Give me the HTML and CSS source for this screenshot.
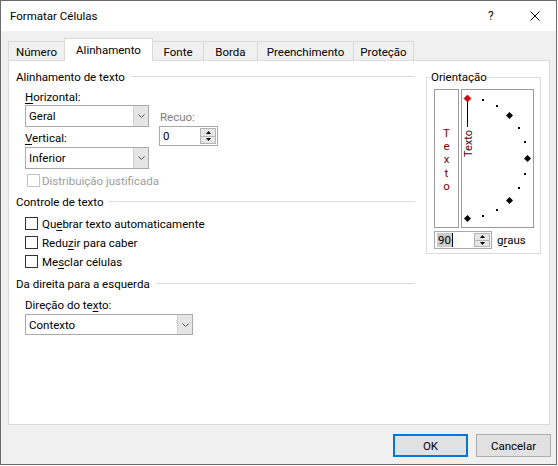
FILE: index.html
```html
<!DOCTYPE html>
<html lang="pt-BR">
<head>
<meta charset="utf-8">
<title>Formatar Células</title>
<link rel="stylesheet" href="styles.css">
</head>
<body>
<div class="window">
  <div class="titlebar">
    <span class="title">Formatar Células</span>
    <span class="help">?</span>
    <span class="close"><svg width="10" height="10" viewBox="0 0 10 10"><path d="M0.5 0.5L9.5 9.5M9.5 0.5L0.5 9.5" stroke="#000" stroke-width="1"/></svg></span>
  </div>
  <div class="client">
    <div class="tabs">
      <div class="tab t-numero">Número</div>
      <div class="tab t-alin active">Alinhamento</div>
      <div class="tab t-fonte">Fonte</div>
      <div class="tab t-borda">Borda</div>
      <div class="tab t-preench">Preenchimento</div>
      <div class="tab t-protecao">Proteção</div>
    </div>
    <div class="pane">
      <div class="left">
        <div class="ghead">Alinhamento de texto</div>
        <div class="align-fields">
          <div class="col-a">
            <div class="lbl"><u>H</u>orizontal:</div>
            <div class="combo"><span class="combo-val">Geral</span><span class="combo-btn"><svg width="7" height="4" viewBox="0 0 7 4"><polyline points="0.5,0.5 3.5,3.5 6.5,0.5" fill="none" stroke="#555" stroke-width="1"/></svg></span></div>
            <div class="lbl lbl-v"><u>V</u>ertical:</div>
            <div class="combo combo-v"><span class="combo-val">Inferior</span><span class="combo-btn"><svg width="7" height="4" viewBox="0 0 7 4"><polyline points="0.5,0.5 3.5,3.5 6.5,0.5" fill="none" stroke="#555" stroke-width="1"/></svg></span></div>
          </div>
          <div class="col-b">
            <div class="lbl dim recuo">Recuo:</div>
            <div class="spin spin-recuo">
              <span class="spin-val">0</span>
              <span class="spin-btns">
                <span class="sb"><svg width="5" height="3" viewBox="0 0 5 3"><polygon points="0,3 5,3 2.5,0" fill="#000"/></svg></span>
                <span class="sb"><svg width="5" height="3" viewBox="0 0 5 3"><polygon points="0,0 5,0 2.5,3" fill="#000"/></svg></span>
              </span>
            </div>
          </div>
        </div>
        <div class="check disabled"><span class="box"></span><span>Distribuição justificada</span></div>
        <div class="ghead gh2">Controle de texto</div>
        <div class="check first"><span class="box"></span><span>Qu<u>e</u>brar texto automaticamente</span></div>
        <div class="check"><span class="box"></span><span>Redu<u>z</u>ir para caber</span></div>
        <div class="check"><span class="box"></span><span>Me<u>s</u>clar células</span></div>
        <div class="ghead gh3">Da direita para a esquerda</div>
        <div class="lbl lbl-dir">Direção do te<u>x</u>to:</div>
        <div class="combo combo-dir"><span class="combo-val">Contexto</span><span class="combo-btn"><svg width="7" height="4" viewBox="0 0 7 4"><polyline points="0.5,0.5 3.5,3.5 6.5,0.5" fill="none" stroke="#555" stroke-width="1"/></svg></span></div>
      </div>
      <fieldset class="orient">
        <legend>Orientação</legend>
        <div class="orient-boxes">
          <div class="vbox">T<br>e<br>x<br>t<br>o</div>
          <div class="dial">
            <svg class="dial-svg" width="71" height="137" viewBox="0 0 71 137">
              <line x1="5.5" y1="12" x2="5.5" y2="37" stroke="#000" stroke-width="1"/>
              <text class="dial-text" transform="translate(10 67) rotate(-90)" textLength="27" lengthAdjust="spacingAndGlyphs">Texto</text>
              <polygon points="5.5,5 9,8.5 5.5,12 2,8.5" fill="#e00000" stroke="#700" stroke-width="0.6"/>
              <rect x="20" y="9" width="2" height="2"/>
              <rect x="34" y="15" width="2" height="2"/>
              <polygon points="47.5,22 51,25.5 47.5,29 44,25.5"/>
              <rect x="56" y="37" width="2" height="2"/>
              <rect x="62" y="51" width="2" height="2"/>
              <polygon points="65.5,65 69,68.5 65.5,72 62,68.5"/>
              <rect x="62" y="83" width="2" height="2"/>
              <rect x="56" y="97" width="2" height="2"/>
              <polygon points="47.5,107 51,110.5 47.5,114 44,110.5"/>
              <rect x="34" y="119" width="2" height="2"/>
              <rect x="20" y="125" width="2" height="2"/>
              <polygon points="5.5,125 9,128.5 5.5,132 2,128.5"/>
            </svg>
          </div>
        </div>
        <div class="deg-row">
          <div class="spin spin-deg">
            <span class="spin-val"><span class="sel">90</span><span class="caret"></span></span>
            <span class="spin-btns">
              <span class="sb"><svg width="5" height="3" viewBox="0 0 5 3"><polygon points="0,3 5,3 2.5,0" fill="#000"/></svg></span>
              <span class="sb"><svg width="5" height="3" viewBox="0 0 5 3"><polygon points="0,0 5,0 2.5,3" fill="#000"/></svg></span>
            </span>
          </div>
          <span class="graus">g<u>r</u>aus</span>
        </div>
      </fieldset>
    </div>
    <div class="buttons">
      <button class="btn ok">OK</button>
      <button class="btn">Cancelar</button>
    </div>
  </div>
</div>
</body>
</html>
```

FILE: styles.css
```css
* { box-sizing: border-box; }
html, body { margin: 0; background: #fff; }
body {
  font-family: Roboto, "Noto Sans", sans-serif;
  font-size: 11.5px;
  line-height: 16px;
  color: #000;
}
u { text-decoration-thickness: 1px; text-underline-offset: 2px; }

.window {
  width: 557px;
  height: 465px;
  border: 1px solid #6b6b6b;
  background: #f0f0f0;
  display: flex;
  flex-direction: column;
}

.titlebar {
  flex: none;
  height: 30px;
  background: #fff;
  display: flex;
  align-items: center;
  padding-left: 9px;
  font-size: 12px;
}
.title { flex: 1; font-size: 11.5px; }
.help { width: 6px; margin-right: 36px; color: #111; }
.close { width: 10px; height: 10px; margin-right: 16px; display: flex; margin-top: -1px; }

.client {
  flex: 1;
  padding: 7px 5px 0 7px;
  display: flex;
  flex-direction: column;
}

.tabs {
  display: flex;
  align-items: flex-end;
  height: 22px;
}
.tab {
  height: 19px;
  border: 1px solid #d9d9d9;
  border-bottom: 0;
  margin-right: -1px;
  background: #f0f0f0;
  text-align: center;
  padding-top: 2px;
}
.tab.active {
  height: 23px;
  margin-bottom: -1px;
  background: #fff;
  position: relative;
  z-index: 1;
  padding-top: 3px;
}
.t-numero { width: 57px; }
.t-alin { width: 89px; }
.t-fonte { width: 52px; }
.t-borda { width: 55px; }
.t-preench { width: 97px; }
.t-protecao { width: 61px; }

.pane {
  width: 542px;
  height: 365px;
  flex: none;
  border: 1px solid #d9d9d9;
  background: #fff;
  display: grid;
  grid-template-columns: 399px 115px;
  column-gap: 11px;
  align-items: start;
  padding: 8px 8px 0 7px;
}

.left { display: flex; flex-direction: column; }

.ghead {
  display: flex;
  align-items: center;
  height: 16px;
  white-space: nowrap;
}
.ghead::after {
  content: "";
  flex: 1;
  border-top: 1px solid #dcdcdc;
  margin-left: 6px;
  margin-top: -1px;
}
.gh2 { margin-top: 5px; }
.gh3 { margin-top: 5px; }

.lbl { height: 16px; white-space: nowrap; }
.dim { color: #7d7d7d; }
.recuo { padding-left: 1px; }

.align-fields { display: flex; margin: 4px 0 0 9px; }
.col-a { width: 124px; display: flex; flex-direction: column; }
.lbl-v { margin-top: 3px; }
.combo-v { margin-top: 1px; }
.col-b { margin: 20px 0 0 10px; display: flex; flex-direction: column; }

.combo {
  height: 22px;
  border: 1px solid #a9a9a9;
  background: #fff;
  display: flex;
}
.combo-val { flex: 1; padding-left: 3px; line-height: 20px; }
.combo-btn {
  width: 15px;
  background: #e5e5e5;
  border-left: 1px solid #cfcfcf;
  display: flex;
  align-items: center;
  justify-content: center;
}

.spin {
  border: 1px solid #a9a9a9;
  background: #fff;
  display: flex;
}
.spin-val { flex: 1; padding-left: 3px; display: flex; align-items: center; }
.spin-btns {
  width: 16px;
  margin: 1px;
  display: flex;
  flex-direction: column;
}
.sb {
  flex: 1;
  background: #e6e6e6;
  border: 1px solid #b4b4b4;
  display: flex;
  align-items: center;
  justify-content: center;
}
.sb + .sb { border-top: 0; }
.spin-recuo { width: 59px; height: 20px; margin-top: 1px; }

.check {
  display: flex;
  align-items: center;
  height: 19px;
  gap: 4px;
  margin-left: 9px;
  white-space: nowrap;
}
.check .box {
  width: 13px;
  height: 13px;
  border: 1px solid #333;
  background: #fff;
  flex: none;
}
.check.disabled {
  height: 17px;
  margin-top: 3px;
  color: #9d9d9d;
  gap: 2px;
}
.check.disabled .box { border-color: #c4c4c4; margin-left: 2px; }
.check.first { margin-top: 4px; }

.lbl-dir { margin: 5px 0 0 9px; }
.combo-dir { width: 168px; height: 21px; margin: 1px 0 0 9px; }

.orient {
  margin: 0;
  padding: 0 6px 4px 3px;
  border: 1px solid #dcdcdc;
  min-width: 0;
  width: 115px;
}
.orient legend { padding: 0 1px; line-height: 16px; height: 16px; }

.orient-boxes { display: flex; gap: 2px; margin: 4px 0 0 4px; }
.vbox {
  width: 25px;
  height: 139px;
  border: 1px solid #9a9a9a;
  display: flex;
  flex-direction: column;
  justify-content: center;
  text-align: center;
  line-height: 13.3px;
  padding-top: 3px;
  color: #7a0000;
}
.dial {
  width: 73px;
  height: 139px;
  border: 1px solid #9a9a9a;
}
.dial-svg { display: block; }
.dial-text { font-family: Roboto, "Noto Sans", sans-serif; font-size: 11.5px; fill: #4a0000; }

.deg-row { display: flex; align-items: center; margin: 3px 0 0 4px; }
.spin-deg { width: 58px; height: 18px; }
.sel { background: #cccccc; line-height: 14px; padding: 0 1px; margin-left: -1px; }
.caret { width: 1px; height: 14px; background: #000; }
.graus { margin-left: 5px; }

.buttons {
  display: flex;
  justify-content: flex-end;
  gap: 8px;
  margin-top: 9px;
}
.btn {
  width: 75px;
  height: 23px;
  background: #e1e1e1;
  border: 1px solid #adadad;
  font: inherit;
  color: #000;
  padding: 0;
  margin: 0;
}
.btn.ok { border: 2px solid #0078d7; }
```
